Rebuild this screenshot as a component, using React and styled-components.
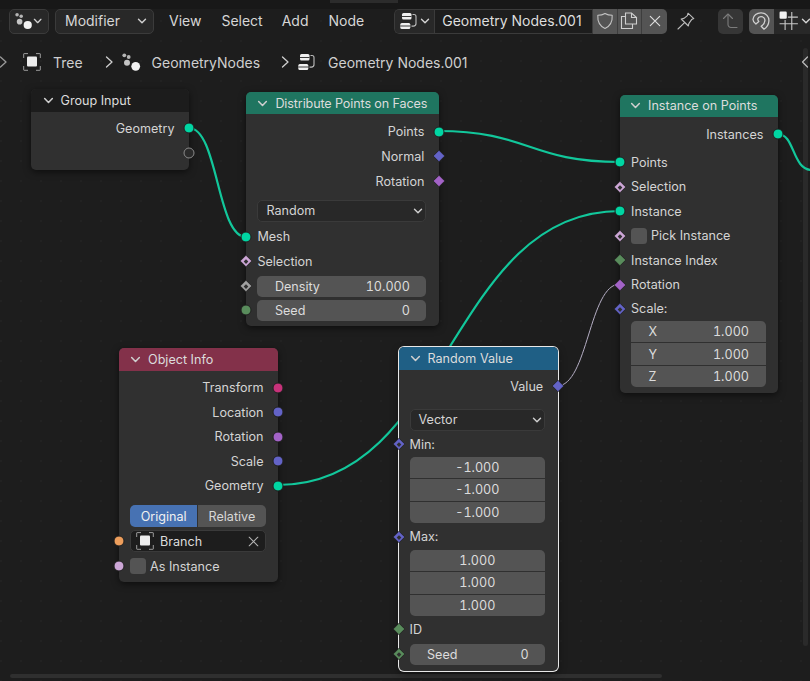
import React from "react";
import styled, { createGlobalStyle } from "styled-components";

const Global = createGlobalStyle`
  html, body { margin: 0; padding: 0; background: #1d1d1d; overflow: hidden; }
  * { box-sizing: border-box; }
`;

const Screen = styled.div`
  position: relative;
  width: 810px;
  height: 681px;
  overflow: hidden;
  display: flex;
  flex-direction: column;
  background-color: #1d1d1d;
  background-image: radial-gradient(circle at 1px 1px, #222222 1px, transparent 1.2px);
  background-size: 20px 20px;
  font-family: Inter, "Noto Sans", sans-serif;
  font-size: 13px;
  color: #d4d4d4;
`;

const TopStrip = styled.div`
  height: 9px;
  flex: none;
  background: #181818;
  display: flex;
  justify-content: flex-end;
  align-items: flex-start;
  padding-right: 412px;
`;
const StripTab = styled.div`
  width: 68px;
  height: 3px;
  background: #2c2c2c;
`;

const Toolbar = styled.div`
  height: 24.5px;
  flex: none;
  display: flex;
  align-items: stretch;
  padding-left: 9px;
  white-space: nowrap;
  font-size: 14px;
  line-height: 22px;
`;
const Picker = styled.div`
  width: ${p => p.$w}px;
  margin-left: ${p => p.$ml || 0}px;
  flex: none;
  display: flex;
  align-items: center;
  justify-content: space-between;
  padding: 0 6px 1px ${p => p.$pl || 5}px;
  background: #282828;
  border: 1px solid #3b3b3b;
  border-radius: 5px;
  color: #d6d6d6;
`;
const Menu = styled.div`
  display: flex;
  align-items: center;
  margin-left: ${p => p.$ml}px;
  padding-bottom: 1px;
  color: #d6d6d6;
`;
const Compound = styled.div`
  margin-left: ${p => p.$ml || 0}px;
  flex: none;
  display: flex;
  align-items: stretch;
  border-radius: ${p => (p.$clip ? "5px 0 0 5px" : "5px")};
  overflow: hidden;
`;
const BrowseBtn = styled.div`
  width: 40px;
  display: flex;
  align-items: center;
  gap: 2px;
  padding-left: 5px;
  background: #282828;
  border: 1px solid #3b3b3b;
  border-right: none;
  border-radius: 5px 0 0 5px;
`;
const NameField = styled.div`
  width: 159px;
  display: flex;
  align-items: center;
  padding: 0 0 1px 7px;
  background: #1d1d1d;
  border: 1px solid #3b3b3b;
  color: #dedede;
`;
const IconBtn = styled.div`
  width: ${p => p.$w || 24.5}px;
  margin-left: ${p => p.$ml || 0}px;
  flex: none;
  display: flex;
  align-items: center;
  justify-content: ${p => (p.$end ? "flex-end" : "center")};
  padding-right: ${p => (p.$end ? 1 : 0)}px;
  gap: 2px;
  background: ${p => p.$bg || "transparent"};
  border-right: ${p => (p.$div ? "1px solid #3d3d3d" : "none")};
  border-radius: ${p => p.$r || 0}px;
`;

const Breadcrumb = styled.div`
  height: 26px;
  margin-top: 15.5px;
  flex: none;
  display: flex;
  align-items: center;
  white-space: nowrap;
  font-size: 14px;
  color: #cfcfcf;
`;
const Crumb = styled.span`
  margin-left: ${p => p.$ml}px;
  flex: none;
  display: flex;
  align-items: center;
`;

const Links = styled.svg`
  position: absolute;
  left: 0;
  top: 0;
  fill: none;
`;

const Node = styled.div`
  position: absolute;
  left: ${p => p.$x}px;
  top: ${p => p.$y}px;
  width: ${p => p.$w}px;
  background: #303030;
  border-radius: 5px;
  box-shadow: ${p =>
    p.$active
      ? "0 0 0 1px #e8e8e8, 0 3px 8px rgba(0,0,0,.45)"
      : "0 2px 7px rgba(0,0,0,.55)"};
`;
const NodeHead = styled.div`
  height: ${p => p.$h}px;
  display: flex;
  align-items: center;
  gap: 7px;
  padding-left: ${p => p.$pl}px;
  background: ${p => p.$bg};
  border-radius: 5px 5px 0 0;
  color: #dcdcdc;
  font-size: 12.6px;
  letter-spacing: ${p => p.$ls || 0}px;
  white-space: nowrap;
`;
const NodeBody = styled.div`
  padding: ${p => p.$pt}px 0 ${p => p.$pb}px;
`;
const Row = styled.div`
  position: relative;
  height: ${p => p.$h || 24.5}px;
  margin-top: ${p => p.$mt || 0}px;
  display: flex;
  align-items: center;
  justify-content: ${p => (p.$right ? "flex-end" : "flex-start")};
  padding: 0 ${p => (p.$right ? 14.5 : 12.5)}px 0 11px;
  font-size: 12.6px;
  color: #d4d4d4;
  white-space: nowrap;
`;

const Socket = styled.span`
  position: absolute;
  top: 50%;
  ${p => (p.$right ? "right: 0;" : "left: 0;")}
  width: 11px;
  height: 11px;
  transform: translate(${p => (p.$right ? "50%" : "-50%")}, -50%)
    ${p => (p.$shape === "d" ? "rotate(45deg) scale(0.82)" : "")};
  background: ${p => (p.$empty ? "#2b2b2b" : p.$c)};
  border: 1px solid ${p => (p.$empty ? "#8a8a8a" : "#1f1f1f")};
  border-radius: ${p => (p.$shape === "d" ? "1px" : "50%")};
  z-index: 2;
  display: flex;
  align-items: center;
  justify-content: center;
  &::after {
    content: "";
    display: ${p => (p.$dot ? "block" : "none")};
    width: 4px;
    height: 4px;
    background: #303030;
  }
`;

const Dropdown = styled.div`
  flex: 1;
  height: 100%;
  display: flex;
  align-items: center;
  justify-content: space-between;
  padding: 0 2px 0 8px;
  background: #282828;
  border: 1px solid #3a3a3a;
  border-radius: 5px;
`;
const Field = styled.div`
  flex: 1;
  height: 100%;
  display: flex;
  align-items: center;
  justify-content: space-between;
  padding: 0 16.5px 0 17.5px;
  background: #545454;
  border-radius: 5px;
  color: #dcdcdc;
  font-variant-numeric: tabular-nums;
`;
const FieldStack = styled.div`
  margin: ${p => p.$mt || 0}px 12.5px 0 11px;
  height: 66.5px;
  display: flex;
  flex-direction: column;
  gap: 1px;
  border-radius: 5px;
  overflow: hidden;
  background: #303030;
  font-size: 12.6px;
  color: #dcdcdc;
  font-variant-numeric: tabular-nums;
`;
const StackCell = styled.div`
  flex: 1;
  display: flex;
  align-items: center;
  justify-content: ${p => (p.$center ? "center" : "space-between")};
  padding: ${p => (p.$center ? "0" : "0 16.5px 0 17.5px")};
  background: #545454;
`;
const Segmented = styled.div`
  flex: 1;
  height: 100%;
  display: flex;
  border-radius: 5px;
  overflow: hidden;
  gap: 1px;
`;
const Segment = styled.div`
  flex: 1;
  display: flex;
  align-items: center;
  justify-content: center;
  background: ${p => (p.$on ? "#4772b3" : "#545454")};
  color: ${p => (p.$on ? "#f0f0f0" : "#d8d8d8")};
`;
const ObjectField = styled.div`
  flex: 1;
  height: 100%;
  display: flex;
  align-items: center;
  gap: 6px;
  padding: 0 6px 0 5px;
  background: #1d1d1d;
  border: 1px solid #3a3a3a;
  border-radius: 5px;
  color: #dcdcdc;
  & > span { flex: 1; }
`;
const Check = styled.span`
  width: 16px;
  height: 16px;
  flex: none;
  margin-right: 4px;
  background: #545454;
  border-radius: 3.5px;
`;

const VScroll = styled.div`
  position: absolute;
  left: 803px;
  top: 48px;
  width: 5px;
  height: 598px;
  background: #2a2a2a;
  border-radius: 3px;
`;
const HScroll = styled.div`
  position: absolute;
  left: 10px;
  top: 674px;
  width: 652px;
  height: 4px;
  background: #2f2f2f;
  border-radius: 2px;
`;
const ScrollArrow = styled.div`
  position: absolute;
  left: 801px;
  top: 56px;
  display: flex;
`;

const Chevron = ({ size = 10, c = "#cfcfcf", w = 1.4 }) => (
  <svg width={size} height={size} viewBox="0 0 10 10" fill="none">
    <path d="M1.5 3.2 L5 6.8 L8.5 3.2" stroke={c} strokeWidth={w} strokeLinecap="round" strokeLinejoin="round" />
  </svg>
);
const ChevRight = ({ c = "#cfcfcf" }) => (
  <svg width="9" height="12" viewBox="0 0 9 12" fill="none">
    <path d="M1.5 1 L7 6 L1.5 11" stroke={c} strokeWidth="1.3" strokeLinecap="round" strokeLinejoin="round" />
  </svg>
);
const NodesIcon = () => (
  <svg width="20" height="20" viewBox="0 0 20 20">
    <circle cx="3.3" cy="3.3" r="1.9" fill="#b5b5b5" />
    <circle cx="7.7" cy="5" r="1.9" fill="#b5b5b5" />
    <circle cx="6" cy="10.7" r="3" fill="#c4c4c4" />
    <circle cx="14.7" cy="14.3" r="4.4" fill="#f2f2f2" />
  </svg>
);
const ObjectIcon = () => (
  <svg width="18" height="18" viewBox="0 0 18 18" fill="none">
    <path d="M.7 5V1a.4.4 0 0 1 .4-.4H5M13 .6h3.9a.4.4 0 0 1 .4.4V5M17.3 13v3.9a.4.4 0 0 1-.4.4H13M5 17.3H1.1a.4.4 0 0 1-.4-.4V13" stroke="#9c9c9c" strokeWidth="1" />
    <rect x="4" y="3.6" width="10" height="10" rx="1" fill="#ececec" />
  </svg>
);
const TreeIcon = () => (
  <svg width="18" height="18" viewBox="0 0 18 18" fill="none">
    <rect x="2" y="1" width="9.5" height="6.5" rx="1.5" fill="#f0f0f0" />
    <rect x="0.3" y="11" width="10" height="6" rx="1.5" fill="#f0f0f0" />
    <path d="M12.5 2.5h1.5a2 2 0 0 1 2 2v7a2.6 2.6 0 0 1-2.6 2.6H11.5" stroke="#bdbdbd" strokeWidth="1.1" />
    <rect x="2" y="4" width="9.5" height="1" fill="#3a3a3a" />
    <rect x="0.3" y="13.5" width="10" height="1" fill="#3a3a3a" />
  </svg>
);
const ShieldIcon = () => (
  <svg width="18" height="18" viewBox="0 0 18 18" fill="none">
    <path d="M9 1.5 C11.5 3 14 3.3 16.2 3.3 C16.6 9.5 14.5 14 9 16.6 C3.5 14 1.4 9.5 1.8 3.3 C4 3.3 6.5 3 9 1.5Z" stroke="#c2c2c2" strokeWidth="1.1" strokeLinejoin="round" />
  </svg>
);
const CopyIcon = () => (
  <svg width="18" height="18" viewBox="0 0 18 18" fill="none" stroke="#cfcfcf" strokeWidth="1.1">
    <path d="M5.5 4.5H1.5V16.5H12.5V12" />
    <path d="M5.5 1H11.5L16.5 5.5V12H5.5Z" />
    <path d="M11.5 1V5.5H16.5" />
  </svg>
);
const CloseIcon = ({ size = 12, c = "#dedede" }) => (
  <svg width={size} height={size} viewBox="0 0 12 12" fill="none">
    <path d="M1.3 1.3L10.7 10.7M10.7 1.3L1.3 10.7" stroke={c} strokeWidth="1.15" strokeLinecap="round" />
  </svg>
);
const PinIcon = () => (
  <svg width="18" height="18" viewBox="0 0 18 18" fill="none" stroke="#bdbdbd" strokeWidth="1.1" strokeLinejoin="round" strokeLinecap="round">
    <path d="M11 1.2 L16.8 6.6 L14.6 7.6 L11.8 11.6 L11.4 14 L4.2 7 L7 6.4 L10.4 3.6 Z" />
    <path d="M7.6 10.6 L1 17" />
  </svg>
);
const UpIcon = () => (
  <svg width="18" height="18" viewBox="0 0 18 18" fill="none" stroke="#7c7c7c" strokeWidth="1.1" strokeLinecap="round" strokeLinejoin="round">
    <path d="M2.5 6.5 L7 2 L11.5 6.5" />
    <path d="M7 2.5 V12.5 A3 3 0 0 0 10 15.5 H16" />
  </svg>
);
const MagnetIcon = () => (
  <svg width="18" height="18" viewBox="0 0 18 18" fill="none" stroke="#cfcfcf" strokeWidth="1.3" strokeLinejoin="round">
    <path d="M1 7.3 C1.3 3.2 5 .6 9.3 .8 C14 1 17.2 4.8 16.9 9 C16.7 12.4 14.5 15.6 12 17.2 L9.2 14.2 C11.2 12.8 12.8 10.8 12.9 8.6 C13 6.4 11.6 4.8 9.2 4.7 C7.4 4.6 6.2 5.4 5.8 6.8 C5.6 7.8 6.1 8.6 6.8 9.4 L3.9 12 C2.4 10.8 .9 9.2 1 7.3Z" />
  </svg>
);
const SnapIcon = () => (
  <svg width="20" height="20" viewBox="0 0 18 18" fill="none">
    <path d="M11.5 1V17M5.5 8V17M0.5 11.5H17M8 5.5H17" stroke="#c8c8c8" strokeWidth="1" />
    <rect x="0.5" y="0.5" width="6.5" height="6.5" rx="1" fill="#f2f2f2" />
  </svg>
);

const GEO = "#00d6a3";
const VEC = "#6363c7";
const ROT = "#a363c7";
const BOOL = "#cca6d6";
const INT = "#598c5c";
const FLOAT = "#a1a1a1";
const LINK = "#12c79b";

export default function App() {
  return (
    <Screen>
      <Global />
      <TopStrip><StripTab /></TopStrip>
      <Toolbar>
        <Picker $w={40} $pl={4}><NodesIcon /><Chevron /></Picker>
        <Picker $w={99} $ml={6} $pl={9}>Modifier<Chevron /></Picker>
        <Menu $ml={15}>View</Menu>
        <Menu $ml={20}>Select</Menu>
        <Menu $ml={19}>Add</Menu>
        <Menu $ml={20}>Node</Menu>
        <Compound $ml={30}>
          <BrowseBtn><TreeIcon /><Chevron /></BrowseBtn>
          <NameField>Geometry Nodes.001</NameField>
          <IconBtn $bg="#545454" $div><ShieldIcon /></IconBtn>
          <IconBtn $bg="#545454" $div><CopyIcon /></IconBtn>
          <IconBtn $bg="#545454" $w={25}><CloseIcon /></IconBtn>
        </Compound>
        <IconBtn $ml={7} $w={24}><PinIcon /></IconBtn>
        <IconBtn $ml={20} $bg="#363636" $r={5}><UpIcon /></IconBtn>
        <Compound $ml={6.5} $clip>
          <IconBtn $bg="#545454"><MagnetIcon /></IconBtn>
          <IconBtn $bg="#282828" $w={38} $end><SnapIcon /><Chevron /></IconBtn>
        </Compound>
      </Toolbar>
      <Breadcrumb>
        <Crumb $ml={-1}><ChevRight c="#9a9a9a" /></Crumb>
        <Crumb $ml={15}><ObjectIcon /></Crumb>
        <Crumb $ml={12}>Tree</Crumb>
        <Crumb $ml={22}><ChevRight /></Crumb>
        <Crumb $ml={7}><NodesIcon /></Crumb>
        <Crumb $ml={11}>GeometryNodes</Crumb>
        <Crumb $ml={21}><ChevRight /></Crumb>
        <Crumb $ml={8}><TreeIcon /></Crumb>
        <Crumb $ml={12}>Geometry Nodes.001</Crumb>
      </Breadcrumb>

      <VScroll />
      <ScrollArrow>
        <svg width="8" height="12" viewBox="0 0 8 12" fill="none">
          <path d="M6.5 1 L1.5 6 L6.5 11" stroke="#bdbdbd" strokeWidth="1.2" strokeLinecap="round" strokeLinejoin="round" />
        </svg>
      </ScrollArrow>
      <HScroll />

      <Links width="810" height="681" viewBox="0 0 810 681">
        <path d="M189 128 C218 128 217 237 246 237" stroke={LINK} strokeWidth="2.2" />
        <path d="M438 131 C529 131 529 162 620 162" stroke={LINK} strokeWidth="2.2" />
        <path d="M278 485 C449 485 449 211 620 211" stroke={LINK} strokeWidth="2.2" />
        <path d="M778 134 C795 134 792 170 812 170" stroke={LINK} strokeWidth="2.2" />
        <path d="M557 386 C588 386 589 284 620 284" stroke="#b5aec4" strokeWidth="1" />
      </Links>

      <Node $x={30.5} $y={89} $w={158.5}>
        <NodeHead $h={23} $pl={12} $bg="#1c1c1c"><Chevron size={11} />Group Input</NodeHead>
        <NodeBody $pt={4} $pb={5}>
          <Row $right>Geometry<Socket $right $c={GEO} /></Row>
          <Row $right><Socket $right $empty /></Row>
        </NodeBody>
      </Node>

      <Node $x={246.4} $y={92} $w={192.5}>
        <NodeHead $h={22} $pl={11} $ls={-0.12} $bg="#1f7560"><Chevron size={11} />Distribute Points on Faces</NodeHead>
        <NodeBody $pt={5.5} $pb={5}>
          <Row $right>Points<Socket $right $c={GEO} /></Row>
          <Row $right>Normal<Socket $right $shape="d" $c={VEC} /></Row>
          <Row $right $h={25}>Rotation<Socket $right $shape="d" $c={ROT} /></Row>
          <Row $h={22} $mt={6}><Dropdown>Random<Chevron /></Dropdown></Row>
          <Row $mt={3}><Socket $c={GEO} />Mesh</Row>
          <Row $h={24.5}><Socket $shape="d" $dot $c={BOOL} />Selection</Row>
          <Row $h={21} $mt={2}><Socket $shape="d" $dot $c={FLOAT} /><Field><span>Density</span><span>10.000</span></Field></Row>
          <Row $h={21} $mt={3}><Socket $c={INT} /><Field><span>Seed</span><span>0</span></Field></Row>
        </NodeBody>
      </Node>

      <Node $x={620} $y={95} $w={158}>
        <NodeHead $h={21.7} $pl={10} $bg="#1f7560"><Chevron size={11} />Instance on Points</NodeHead>
        <NodeBody $pt={5.3} $pb={5.5}>
          <Row $right $h={25}>Instances<Socket $right $c={GEO} /></Row>
          <Row $mt={3}><Socket $c={GEO} />Points</Row>
          <Row><Socket $shape="d" $dot $c={BOOL} />Selection</Row>
          <Row><Socket $c={GEO} />Instance</Row>
          <Row><Socket $shape="d" $dot $c={BOOL} /><Check />Pick Instance</Row>
          <Row><Socket $shape="d" $c={INT} />Instance Index</Row>
          <Row><Socket $shape="d" $c={ROT} />Rotation</Row>
          <Row $h={24}><Socket $shape="d" $dot $c={VEC} />Scale:</Row>
          <FieldStack>
            <StackCell><span>X</span><span>1.000</span></StackCell>
            <StackCell><span>Y</span><span>1.000</span></StackCell>
            <StackCell><span>Z</span><span>1.000</span></StackCell>
          </FieldStack>
        </NodeBody>
      </Node>

      <Node $x={119} $y={348} $w={159}>
        <NodeHead $h={23} $pl={11} $bg="#83314a"><Chevron size={11} />Object Info</NodeHead>
        <NodeBody $pt={4.3} $pb={3.7}>
          <Row $right>Transform<Socket $right $c="#c7327a" /></Row>
          <Row $right>Location<Socket $right $c={VEC} /></Row>
          <Row $right>Rotation<Socket $right $c={ROT} /></Row>
          <Row $right>Scale<Socket $right $c={VEC} /></Row>
          <Row $right>Geometry<Socket $right $c={GEO} /></Row>
          <Row $h={21.5} $mt={7.7}>
            <Segmented><Segment $on>Original</Segment><Segment>Relative</Segment></Segmented>
          </Row>
          <Row $h={22} $mt={3.5}>
            <Socket $c="#ed9e5c" />
            <ObjectField><ObjectIcon /><span>Branch</span><CloseIcon size={11} c="#b5b5b5" /></ObjectField>
          </Row>
          <Row $mt={1.75}><Socket $c={BOOL} /><Check />As Instance</Row>
        </NodeBody>
      </Node>

      <Node $x={398.5} $y={347} $w={159.2} $active>
        <NodeHead $h={23} $pl={11} $bg="#1f5f85"><Chevron size={11} />Random Value</NodeHead>
        <NodeBody $pt={4} $pb={6}>
          <Row $right>Value<Socket $right $shape="d" $c={VEC} /></Row>
          <Row $h={22} $mt={10}><Dropdown>Vector<Chevron /></Dropdown></Row>
          <Row $mt={1.5}><Socket $shape="d" $dot $c={VEC} />Min:</Row>
          <FieldStack>
            <StackCell $center>-1.000</StackCell>
            <StackCell $center>-1.000</StackCell>
            <StackCell $center>-1.000</StackCell>
          </FieldStack>
          <Row $mt={1.5}><Socket $shape="d" $dot $c={VEC} />Max:</Row>
          <FieldStack $mt={0.7}>
            <StackCell $center>1.000</StackCell>
            <StackCell $center>1.000</StackCell>
            <StackCell $center>1.000</StackCell>
          </FieldStack>
          <Row $mt={0.8}><Socket $shape="d" $c={INT} />ID</Row>
          <Row $h={21} $mt={2.5}><Socket $shape="d" $dot $c={INT} /><Field><span>Seed</span><span>0</span></Field></Row>
        </NodeBody>
      </Node>
    </Screen>
  );
}
